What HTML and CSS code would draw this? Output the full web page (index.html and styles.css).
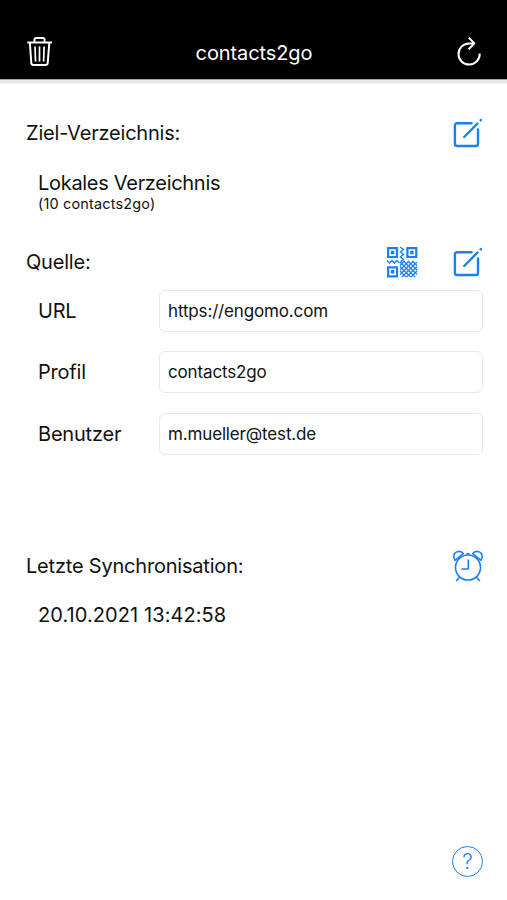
FILE: index.html
```html
<!DOCTYPE html>
<html lang="de">
<head>
  <meta charset="UTF-8" />
  <meta name="viewport" content="width=device-width, initial-scale=1.0" />
  <title>contacts2go</title>
  <link rel="stylesheet" href="styles.css">
</head>
<body>
  <header class="navbar">
    <button class="icon-btn" aria-label="Löschen">
      <svg class="icon" viewBox="0 0 32 32">
        <path stroke-width="2" d="M4.3 7.5H29M11.5 7V4.5Q11.5 3 13 3H20Q21.5 3 21.5 4.5V7M6.9 8L8.3 28.2Q8.5 30 10.5 30H22.5Q24.5 30 24.7 28.2L26.3 8" />
        <path stroke-width="1.7" d="M12 11.5L12.5 26.5M16.5 11.5V26.5M21.1 11.5L20.6 26.5" />
      </svg>
    </button>
    <h1 class="title">contacts2go</h1>
    <button class="icon-btn" aria-label="Synchronisieren">
      <svg class="icon" viewBox="0 0 32 32">
        <path stroke-width="2" d="M20.5 8.4H16A10.6 10.6 0 1 0 26.7 18.5M15.8 2.6L21.4 8.4L15.6 14.2" />
      </svg>
    </button>
  </header>

  <main class="content">
    <section class="target">
      <div class="section-head">
        <h2>Ziel-Verzeichnis:</h2>
        <button class="icon-btn" aria-label="Bearbeiten">
          <svg class="icon edit" viewBox="0 0 32 32">
            <path d="M19.5 6.2H5.2Q2.9 6.2 2.9 8.5V26.7Q2.9 29 5.2 29H23.7Q26 29 26 26.7V12.5M12.2 20L25.5 6.5M28.6 3.4L28.9 3.1" />
          </svg>
        </button>
      </div>
      <p class="value">Lokales Verzeichnis</p>
      <p class="count">(10 contacts2go)</p>
    </section>

    <section class="source">
      <div class="section-head">
        <h2>Quelle:</h2>
        <div class="actions">
          <button class="icon-btn" aria-label="QR-Code scannen">
            <svg class="icon qr" viewBox="0 0 32 32">
              <path stroke-width="2.2" d="M2.1 2.1H11V11H2.1ZM21.4 2.1H30.3V11H21.4ZM2.1 21.4H11V30.3H2.1Z" />
              <path class="fill" d="M4.8 4.8h3.5v3.5H4.8zM24.1 4.8h3.5v3.5h-3.5zM4.8 24.1h3.5v3.5H4.8z" />
              <path stroke-width="1.4" d="M14 1L17.5 3.5L14.5 6L17.5 8.5L14.5 11L17.5 13.5L14.5 16M1 14.5L3.5 17L6 14.5L8.5 17L11 14.5L13.5 17" />
              <path stroke-width="1.3" d="M14 19.5L18.5 15M14 24L23 15M14 28.5L27.5 15M16 31L31 16M20.5 31L31 20.5M25 31L31 25" />
              <path stroke-width="1.3" d="M26.5 15L31 19.5M22 15L31 24M17.5 15L31 28.5M14 16L29 31M14 20.5L24.5 31M14 25L20 31" />
            </svg>
          </button>
          <button class="icon-btn" aria-label="Bearbeiten">
            <svg class="icon edit" viewBox="0 0 32 32">
              <path d="M19.5 6.2H5.2Q2.9 6.2 2.9 8.5V26.7Q2.9 29 5.2 29H23.7Q26 29 26 26.7V12.5M12.2 20L25.5 6.5M28.6 3.4L28.9 3.1" />
            </svg>
          </button>
        </div>
      </div>
      <div class="fields">
        <label for="url">URL</label>
        <input id="url" type="text" value="https://engomo.com" />
        <label for="profil">Profil</label>
        <input id="profil" type="text" value="contacts2go" />
        <label for="benutzer">Benutzer</label>
        <input id="benutzer" type="text" value="m.mueller@test.de" />
      </div>
    </section>

    <section class="sync">
      <div class="section-head">
        <h2>Letzte Synchronisation:</h2>
        <button class="icon-btn" aria-label="Zeitplan">
          <svg class="icon clock" viewBox="0 0 32 32">
            <circle cx="16" cy="17.5" r="12.5" />
            <path d="M16.3 9.5V19H9.5M7.5 27.3L4.2 31M24.5 27.3L27.8 31M14.3 3.7H17.7" />
            <path d="M3 10.3C.2 6.5 2.2 2 6.3 1.5C8.5 1.2 10.4 2.1 11.3 3.6ZM29 10.3C31.8 6.5 29.8 2 25.7 1.5C23.5 1.2 21.6 2.1 20.7 3.6Z" />
          </svg>
        </button>
      </div>
      <p class="value date">20.10.2021 13:42:58</p>
    </section>
  </main>

  <footer class="footer">
    <button class="help" aria-label="Hilfe">?</button>
  </footer>
</body>
</html>
```

FILE: styles.css
```css
* {
  box-sizing: border-box;
}

body {
  margin: 0;
  height: 900px;
  display: flex;
  flex-direction: column;
  font-family: Inter, "Liberation Sans", sans-serif;
  color: #111;
  background-color: #fff;
}

h1,
h2,
p {
  margin: 0;
  font-weight: 400;
}

.navbar {
  height: 79px;
  padding: 35px 22px 0 23px;
  display: flex;
  justify-content: space-between;
  align-items: flex-start;
  background-color: #000;
  color: #fff;
  box-shadow: 0 1px 0 #a8a8a8, 0 4px 0 #e6e6e6, 0 5px 0 #f5f5f5;
}

.title {
  font-size: 20px;
  line-height: 36px;
  letter-spacing: -0.1px;
}

.icon-btn {
  display: block;
  width: 32px;
  height: 32px;
  padding: 0;
  border: none;
  background: none;
  color: #1a80f5;
  cursor: pointer;
}

.navbar .icon-btn {
  color: #fff;
}

.icon {
  display: block;
  width: 32px;
  height: 32px;
  fill: none;
  stroke: currentColor;
  stroke-width: 1.6;
  stroke-linejoin: round;
}

.edit {
  stroke-width: 2.4;
  stroke-linecap: round;
}

.qr {
  stroke-linejoin: miter;
}

.fill {
  fill: #1a80f5;
  stroke: none;
}

.content {
  flex: 1;
  padding: 38px 23px 0 26px;
}

.section-head {
  display: flex;
  justify-content: space-between;
  align-items: center;
  height: 32px;
}

.section-head h2 {
  font-size: 20px;
  line-height: 32px;
  letter-spacing: -0.2px;
}

.actions {
  display: flex;
  gap: 34px;
}

.target {
  height: 129px;
}

.value {
  margin: 20px 0 0 12px;
  font-size: 20px;
  line-height: 28px;
  letter-spacing: -0.3px;
}

.date {
  margin-top: 19px;
  letter-spacing: 0.08px;
}

.count {
  margin-left: 12px;
  font-size: 14.5px;
  line-height: 14px;
  letter-spacing: 0.15px;
}

.source {
  height: 304px;
}

.fields {
  display: grid;
  grid-template-columns: 121px 1fr;
  row-gap: 19.4px;
  column-gap: 12px;
  align-items: center;
  margin: 12px 1px 0 0;
}

.fields label {
  padding-left: 12px;
  font-size: 20px;
  letter-spacing: -0.2px;
}

.fields input {
  width: 100%;
  height: 42px;
  padding: 0 8px;
  border: 1px solid #e9e9e9;
  border-radius: 6px;
  background-color: #fff;
  color: #111;
  font-family: inherit;
  font-size: 17px;
  letter-spacing: -0.15px;
}

.footer {
  display: flex;
  justify-content: flex-end;
  padding: 0 24px 23px;
}

.help {
  width: 31px;
  height: 31px;
  padding: 0;
  border: 1.5px solid #1a80f5;
  border-radius: 50%;
  background: none;
  color: #1a80f5;
  font-family: inherit;
  font-size: 21px;
  font-weight: 300;
  line-height: 28px;
  cursor: pointer;
}
```
